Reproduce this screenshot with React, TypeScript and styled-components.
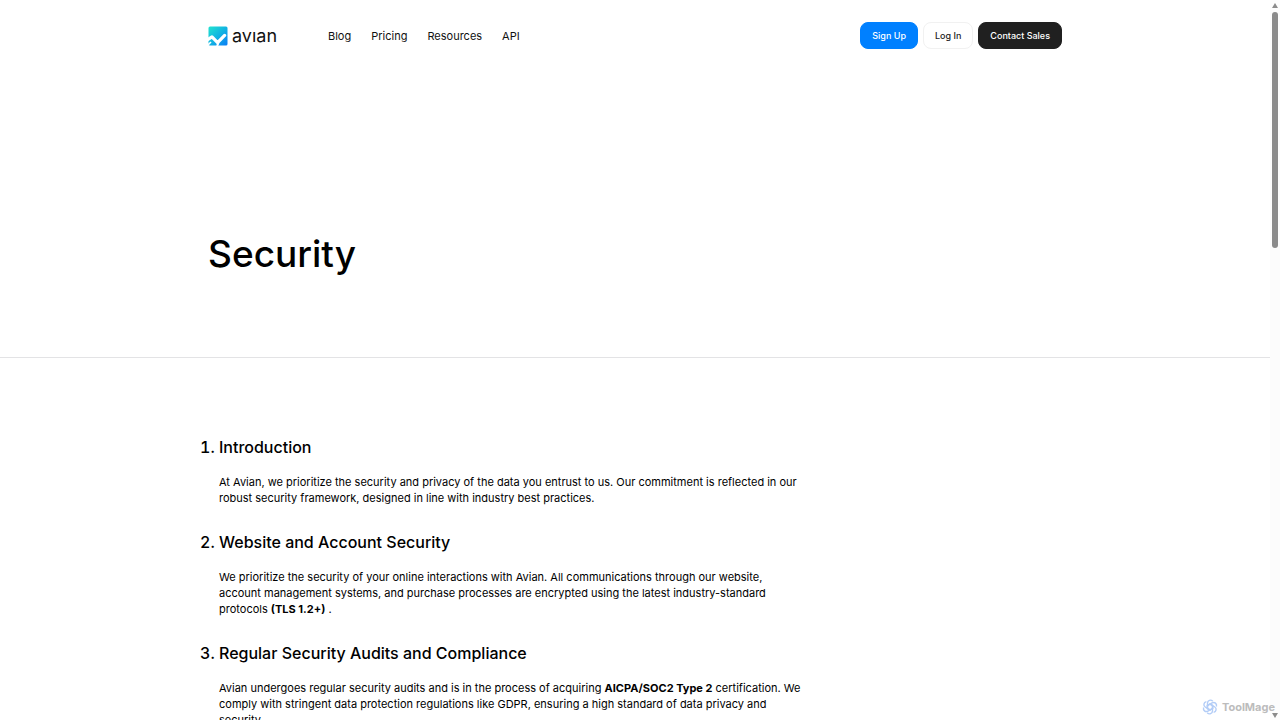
import React from "react";
import styled, { createGlobalStyle } from "styled-components";

const GlobalStyle = createGlobalStyle`
  * { box-sizing: border-box; }
  body {
    margin: 0;
    background: #fff;
    color: #000;
    font-family: Inter, "Liberation Sans", sans-serif;
    font-size: 11px;
    line-height: 16px;
  }
`;

const Shell = styled.div`
  display: grid;
  grid-template-columns: minmax(0, 1fr) 10px;
  height: 100vh;
  overflow: hidden;
  position: relative;
`;

const Page = styled.div`
  min-width: 0;
  overflow: hidden;
`;

const Container = styled.div`
  width: 100%;
  max-width: 854px;
  margin: 0 auto;
`;

const Header = styled.header`
  padding: 22px 0;
`;

const Bar = styled(Container)`
  display: flex;
  align-items: center;
`;

const Brand = styled.a`
  display: flex;
  align-items: center;
  gap: 4px;
  width: 120px;
  color: #111;
  text-decoration: none;
`;

const Mark = styled.svg`
  width: 20px;
  height: 20px;
`;

const Wordmark = styled.span`
  font-size: 18px;
  line-height: 24px;
`;

const Nav = styled.nav`
  display: flex;
  flex: 1;
  gap: 20px;
`;

const NavLink = styled.a`
  color: #111;
  text-decoration: none;
`;

const Actions = styled.div`
  display: flex;
  gap: 5px;
`;

const Button = styled.button<{ $bg: string; $fg: string; $line: string }>`
  height: 27px;
  padding: 0 11px;
  border: 1px solid ${(p) => p.$line};
  border-radius: 8px;
  background: ${(p) => p.$bg};
  color: ${(p) => p.$fg};
  font: 500 9px/16px Inter, sans-serif;
  white-space: nowrap;
`;

const Hero = styled.section`
  padding: 159px 0 79px;
  border-bottom: 1px solid #e3e3e5;
`;

const Title = styled.h1`
  margin: 0;
  font-size: 37px;
  line-height: 48px;
  font-weight: 500;
`;

const Body = styled(Container)`
  padding-top: 77px;
`;

const Sections = styled.ol`
  margin: 0;
  padding: 0 0 0 11px;
  max-width: 595px;
`;

const Section = styled.li`
  margin-bottom: 24px;
  font-size: 16px;
  font-weight: 500;
`;

const Heading = styled.h2`
  margin: 0 0 15px;
  font-size: 16px;
  line-height: 24px;
  font-weight: 500;
`;

const Text = styled.p`
  margin: 0;
  font-size: 11px;
  line-height: 16px;
  font-weight: 400;
`;

const Track = styled.div`
  display: flex;
  flex-direction: column;
  align-items: center;
  justify-content: space-between;
  padding: 3px 0 2px;
  background: #fcfcfc;
`;

const Thumb = styled.div`
  width: 6px;
  height: 33%;
  margin: 4px 0 auto;
  border-radius: 3px;
  background: #8b8b8b;
`;

const Arrow = styled.svg`
  width: 6px;
  height: 5px;
  fill: #8b8b8b;
`;

const Watermark = styled.div`
  position: absolute;
  right: 5px;
  bottom: 4px;
  display: flex;
  align-items: center;
  gap: 4px;
  color: #bcbcbc;
  font: 700 11px/18px Inter, sans-serif;
`;

const Knot = styled.svg`
  width: 16px;
  height: 16px;
  fill: none;
  stroke: #b3cdf7;
  stroke-width: 1.4;
`;

const sections = [
  {
    title: "Introduction",
    text: "At Avian, we prioritize the security and privacy of the data you entrust to us. Our commitment is reflected in our robust security framework, designed in line with industry best practices.",
  },
  {
    title: "Website and Account Security",
    text: (
      <>
        We prioritize the security of your online interactions with Avian. All communications through our website,
        account management systems, and purchase processes are encrypted using the latest industry-standard protocols{" "}
        <b>(TLS 1.2+)</b> .
      </>
    ),
  },
  {
    title: "Regular Security Audits and Compliance",
    text: (
      <>
        Avian undergoes regular security audits and is in the process of acquiring <b>AICPA/SOC2 Type 2</b>{" "}
        certification. We comply with stringent data protection regulations like GDPR, ensuring a high standard of data
        privacy and security.
      </>
    ),
  },
];

export default function App() {
  return (
    <Shell>
      <GlobalStyle />
      <Page>
        <Header>
          <Bar>
            <Brand href="#">
              <Mark viewBox="0 0 20 20" aria-hidden="true">
                <defs>
                  <linearGradient id="mark" x1="0" y1="0" x2="1" y2="1">
                    <stop offset="0" stopColor="#22e3cf" />
                    <stop offset="0.5" stopColor="#12b4e2" />
                    <stop offset="1" stopColor="#0a7cf5" />
                  </linearGradient>
                </defs>
                <rect x="0.5" y="0.5" width="19" height="19" rx="1.5" fill="url(#mark)" />
                <path d="M0 13.5 4 10.8 9.6 16.6 16.6 9.4" fill="none" stroke="#fff" strokeWidth="3.2" strokeLinecap="round" strokeLinejoin="round" />
                <path d="M0 19 3 16" stroke="#fff" strokeWidth="1.6" />
                <path d="M9 20 10.5 17" stroke="#fff" strokeWidth="2" />
              </Mark>
              <Wordmark>avıan</Wordmark>
            </Brand>
            <Nav>
              <NavLink href="#">Blog</NavLink>
              <NavLink href="#">Pricing</NavLink>
              <NavLink href="#">Resources</NavLink>
              <NavLink href="#">API</NavLink>
            </Nav>
            <Actions>
              <Button $bg="#0080ff" $fg="#fff" $line="#0080ff">Sign Up</Button>
              <Button $bg="#fff" $fg="#222" $line="#f1f1f1">Log In</Button>
              <Button $bg="#202020" $fg="#fff" $line="#202020">Contact Sales</Button>
            </Actions>
          </Bar>
        </Header>
        <main>
          <Hero>
            <Container>
              <Title>Security</Title>
            </Container>
          </Hero>
          <Body>
            <Sections>
              {sections.map((s) => (
                <Section key={s.title}>
                  <Heading>{s.title}</Heading>
                  <Text>{s.text}</Text>
                </Section>
              ))}
            </Sections>
          </Body>
        </main>
      </Page>
      <Track aria-hidden="true">
        <Arrow viewBox="0 0 6 5"><path d="M3 0 6 5H0z" /></Arrow>
        <Thumb />
        <Arrow viewBox="0 0 6 5"><path d="M0 0H6L3 5z" /></Arrow>
      </Track>
      <Watermark>
        <Knot viewBox="0 0 16 16" aria-hidden="true">
          {[0, 60, 120, 180, 240, 300].map((a) => (
            <path key={a} transform={`rotate(${a} 8 8)`} d="M5.5 9.5V4.2C5.5 1.2 8.8 0.2 10.8 2.2M5.5 6.5 8 5l3 1.7" />
          ))}
        </Knot>
        ToolMage
      </Watermark>
    </Shell>
  );
}
